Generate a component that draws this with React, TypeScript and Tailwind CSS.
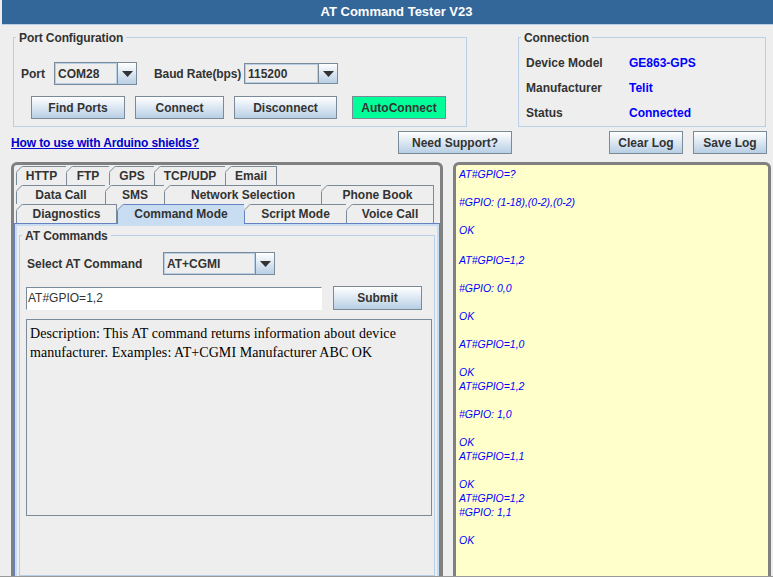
const btn =
  "flex items-center justify-center h-[23px] border border-[#7a8a99] bg-gradient-to-b from-white to-[#b8cfe5] text-xs font-bold text-[#333333]";

const Button = ({ label, className }: { label: string; className: string }) => (
  <button className={`${btn} ${className}`}>{label}</button>
);

const Combo = ({ value, w, h, arrow }: { value: string; w: string; h: string; arrow: string }) => (
  <div className={`flex border border-[#7a8a99] bg-[#eeeeee] ${w} ${h}`}>
    <div className="flex-1 flex items-center pl-[2px] border border-[#b8cfe5] text-xs font-bold text-[#333333]">
      {value}
    </div>
    <div className={`flex items-center justify-center border-l border-[#7a8a99] bg-gradient-to-b from-white to-[#b8cfe5] ${arrow}`}>
      <svg width="11" height="6" viewBox="0 0 11 6">
        <path d="M0 0h11L5.5 6z" fill="#333333" />
      </svg>
    </div>
  </div>
);

const Group = ({ title, className, children }: { title: string; className: string; children: React.ReactNode }) => (
  <div className={`relative border border-[#b8cfe5] ${className}`}>
    <span className="absolute -top-[8px] left-[2px] bg-[#eeeeee] px-[3px] text-xs leading-[16px] font-bold tracking-[-0.1px] text-[#333333]">
      {title}
    </span>
    {children}
  </div>
);

const Tab = ({ label, w, active }: { label: string; w: string; active?: boolean }) => (
  <div
    className={`relative flex items-center justify-center shrink-0 border-t border-r first:border-l text-xs font-bold text-[#333333] ${w} ${
      active ? "bg-[#c8ddf2] border-l border-[#6382bf]" : "bg-[#eeeeee] border-[#7a8a99]"
    }`}
  >
    {label}
    <svg className="absolute -top-px -left-px" width="7" height="7" viewBox="0 0 7 7">
      <path d="M0 0h7L0 7z" fill="#eeeeee" />
      <path d="M0 6.5L6.5 0" stroke={active ? "#6382bf" : "#7a8a99"} fill="none" />
    </svg>
    {active && <div className="absolute -bottom-px left-0 right-0 h-px bg-[#c8ddf2]" />}
  </div>
);

const tabRows = [
  [
    { label: "HTTP", w: "w-[51px]" },
    { label: "FTP", w: "w-[43px]" },
    { label: "GPS", w: "w-[45px]" },
    { label: "TCP/UDP", w: "w-[71px]" },
    { label: "Email", w: "w-[51px]" },
  ],
  [
    { label: "Data Call", w: "w-[90px]" },
    { label: "SMS", w: "w-[59px]" },
    { label: "Network Selection", w: "w-[157px]" },
    { label: "Phone Book", w: "w-[112px]" },
  ],
  [
    { label: "Diagnostics", w: "w-[101px]" },
    { label: "Command Mode", w: "w-[128px]", active: true },
    { label: "Script Mode", w: "w-[102px]" },
    { label: "Voice Call", w: "w-[87px]" },
  ],
];

const logLines: { text: string; gap?: boolean }[] = [
  { text: "AT#GPIO=?" },
  { text: "" },
  { text: "#GPIO: (1-18),(0-2),(0-2)" },
  { text: "" },
  { text: "OK" },
  { text: "" },
  { text: "AT#GPIO=1,2", gap: true },
  { text: "" },
  { text: "#GPIO: 0,0" },
  { text: "" },
  { text: "OK" },
  { text: "" },
  { text: "AT#GPIO=1,0" },
  { text: "" },
  { text: "OK" },
  { text: "AT#GPIO=1,2" },
  { text: "" },
  { text: "#GPIO: 1,0" },
  { text: "" },
  { text: "OK" },
  { text: "AT#GPIO=1,1" },
  { text: "" },
  { text: "OK" },
  { text: "AT#GPIO=1,2" },
  { text: "#GPIO: 1,1" },
  { text: "" },
  { text: "OK" },
];

const connection = [
  { label: "Device Model", value: "GE863-GPS" },
  { label: "Manufacturer", value: "Telit" },
  { label: "Status", value: "Connected" },
];

export default function App() {
  return (
    <div className="w-[773px] h-[577px] overflow-hidden flex flex-col bg-[#eeeeee] border-b border-[#999999] [font-family:Liberation_Sans,Arial,sans-serif]">
      <div className="h-[24px] shrink-0 ml-[2px] pl-[18px] bg-[#336699] flex items-center justify-center text-[13px] font-bold text-white">
        AT Command Tester V23
      </div>
      <div className="h-px shrink-0 bg-[#b8cfe5] ml-[2px]" />

      <div className="flex mt-[12px] ml-[13px]">
        <Group title="Port Configuration" className="w-[454px] h-[90px]">
          <div className="flex items-center mt-[24px] ml-[7px] text-xs font-bold text-[#333333] whitespace-nowrap">
            <span className="w-[33px]">Port</span>
            <Combo value="COM28" w="w-[83px]" h="h-[23px]" arrow="w-[19px]" />
            <span className="ml-[17px] w-[90px] tracking-[-0.1px]">Baud Rate(bps)</span>
            <Combo value="115200" w="w-[94px]" h="h-[21px]" arrow="w-[19px]" />
          </div>
          <div className="flex mt-[11px] ml-[17px]">
            <Button label="Find Ports" className="w-[94px]" />
            <Button label="Connect" className="w-[89px] ml-[10px]" />
            <Button label="Disconnect" className="w-[103px] ml-[10px]" />
            <div className="flex items-center justify-center w-[94px] h-[23px] ml-[15px] border border-[#7a8a99] bg-[#00ff99] text-xs font-bold text-[#333333]">
              AutoConnect
            </div>
          </div>
        </Group>
        <Group title="Connection" className="w-[248px] h-[90px] ml-[51px]">
          <div className="flex flex-col gap-[9px] mt-[17px] ml-[7px]">
            {connection.map((row) => (
              <div key={row.label} className="flex h-[16px] items-center text-xs font-bold">
                <span className="w-[103px] text-[#333333]">{row.label}</span>
                <span className="text-[#0000ff]">{row.value}</span>
              </div>
            ))}
          </div>
        </Group>
      </div>

      <div className="flex items-center mt-[4px] ml-[11px] h-[23px]">
        <a className="w-[387px] text-xs font-bold tracking-[-0.13px] text-[#0000cc] underline">How to use with Arduino shields?</a>
        <Button label="Need Support?" className="w-[114px]" />
        <Button label="Clear Log" className="w-[74px] ml-[97px]" />
        <Button label="Save Log" className="w-[74px] ml-[10px]" />
      </div>

      <div className="flex flex-1 min-h-0 mt-[8px] ml-[11px]">
        <div className="w-[432px] flex flex-col border-[3px] border-b-0 border-[#808080] rounded-t-[6px]">
          <div className="pt-px pl-[2px] flex flex-col">
            {tabRows.map((row, i) => (
              <div key={i} className="flex h-[19px]">
                {row.map((t) => (
                  <Tab key={t.label} label={t.label} w={t.w} active={"active" in t} />
                ))}
              </div>
            ))}
          </div>
          <div className="flex-1 min-h-0 flex flex-col border-x border-t border-[#6382bf]">
            <div className="flex-1 min-h-0 flex flex-col border-x-2 border-t-2 border-[#c8ddf2] pt-[9px] px-[2px]">
              <Group title="AT Commands" className="flex-1 px-[7px]">
                <div className="flex items-center mt-[16px] text-xs font-bold text-[#333333]">
                  <span className="w-[136px]">Select AT Command</span>
                  <Combo value="AT+CGMI" w="w-[112px]" h="h-[23px]" arrow="w-[19px]" />
                </div>
                <div className="flex items-center mt-[11px] ml-[-1px]">
                  <input
                    readOnly
                    value="AT#GPIO=1,2"
                    className="w-[296px] h-[23px] pl-px border border-[#7a8a99] border-r-white border-b-white bg-white text-xs text-[#333333] outline-none"
                  />
                  <Button label="Submit" className="w-[89px] h-[24px] ml-[11px]" />
                </div>
                <div className="w-[406px] h-[197px] mt-[9px] ml-[-1px] border border-[#7a8a99] px-[3px] py-[4px] [font-family:Liberation_Serif,serif] text-sm leading-[19px] tracking-[0.06px] text-black">
                  Description: This AT command returns information about device manufacturer. Examples: AT+CGMI Manufacturer ABC OK
                </div>
              </Group>
            </div>
          </div>
        </div>
        <div className="w-[318px] ml-[10px] border-[3px] border-b-0 border-[#808080] rounded-t-[6px] bg-[#ffffcc] pl-[3px] pt-[2px] overflow-hidden">
          {logLines.map((line, i) => (
            <div key={i} className={`h-[14px] text-[10.5px] leading-[14px] italic text-[#0000ff] ${line.gap ? "mt-[2px]" : ""}`}>
              {line.text}
            </div>
          ))}
        </div>
      </div>
    </div>
  );
}
